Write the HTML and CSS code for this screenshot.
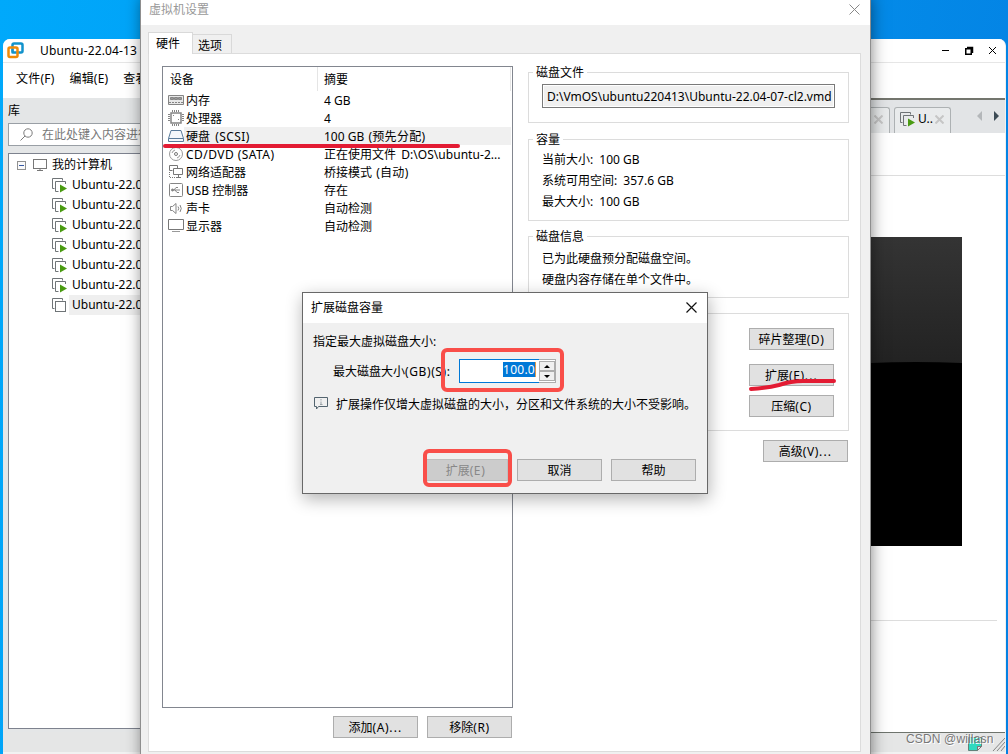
FILE: index.html
```html
<!DOCTYPE html>
<html lang="zh-CN">
<head>
<meta charset="utf-8">
<title>虚拟机设置</title>
<link rel="stylesheet" href="styles.css">
</head>
<body>
<svg class="defs" width="0" height="0">
  <symbol id="vm" viewBox="0 0 16 16"><path d="M3.500 11.500h-2v-10h10v2" fill="none" stroke="#6f7477"/><rect x="4.500" y="4.500" width="10" height="10" fill="#fff" stroke="#6f7477"/></symbol>
  <symbol id="vm-on" viewBox="0 0 16 16"><path d="M3.500 11.500h-2v-10h10v2M14.500 7v-2.500h-10v10h3" fill="none" stroke="#6f7477"/><path d="M9 7.500l7 4-7 4z" fill="#4a9b12"/></symbol>
</svg>
<div class="desktop">
  <section class="main-window">
    <header class="main-title">
      <svg class="logo" width="17" height="17" viewBox="0 0 17 17"><rect x="5.500" y="1.500" width="10" height="9" rx="1.500" fill="none" stroke="#1192cb" stroke-width="2.500"/><rect x="1.500" y="5.500" width="9" height="9.500" rx="1.500" fill="none" stroke="#f08a08" stroke-width="2.500"/><path d="M5.500 7v4.500" stroke="#1192cb" stroke-width="2"/></svg>
      <span class="main-name">Ubuntu-22.04-13</span>
      <svg class="win-buttons" width="56" height="12" viewBox="0 0 56 12"><path d="M1 5.500h7" stroke="#000"/><path d="M24.750 3.750h5.500v5.500h-5.500zM26 2.500h5.500v5.500" fill="none" stroke="#000" stroke-width="1.500"/><path d="M48 2l7 7M55 2l-7 7" stroke="#000"/></svg>
    </header>
    <nav class="menu"><span>文件(F)</span><span>编辑(E)</span><span>查看(V)</span></nav>
    <div class="workspace">
      <aside class="library">
        <div class="library-title">库</div>
        <div class="search"><svg width="13" height="13" viewBox="0 0 13 13" fill="none" stroke="#7b7b7b"><circle cx="8" cy="5" r="4.200"/><path d="M5 8l-4.500 4.500"/></svg><span>在此处键入内容进行搜索</span></div>
        <div class="tree">
          <div class="node root"><svg width="9" height="9" viewBox="0 0 9 9"><rect x=".5" y=".5" width="8" height="8" fill="#fafafa" stroke="#919191"/><path d="M2 4.500h5" stroke="#3558a4"/></svg><svg class="pc" width="14" height="12" viewBox="0 0 14 12" fill="none" stroke="#777"><rect x=".5" y=".5" width="13" height="9"/><path d="M4 11.500h6M7 9.500v2"/></svg><span>我的计算机</span></div>
          <div class="node"><svg class="vm"><use href="#vm-on"/></svg><span>Ubuntu-22.04-07</span></div>
          <div class="node"><svg class="vm"><use href="#vm-on"/></svg><span>Ubuntu-22.04-08</span></div>
          <div class="node"><svg class="vm"><use href="#vm-on"/></svg><span>Ubuntu-22.04-09</span></div>
          <div class="node"><svg class="vm"><use href="#vm-on"/></svg><span>Ubuntu-22.04-10</span></div>
          <div class="node"><svg class="vm"><use href="#vm-on"/></svg><span>Ubuntu-22.04-11</span></div>
          <div class="node"><svg class="vm"><use href="#vm-on"/></svg><span>Ubuntu-22.04-12</span></div>
          <div class="node"><svg class="vm"><use href="#vm"/></svg><span class="current">Ubuntu-22.04-13</span></div>
        </div>
      </aside>
      <div class="content">
        <div class="tabs">
          <div class="vtab"><svg width="9" height="9" viewBox="0 0 9 9"><path d="M.5.5l8 8M8.500.5l-8 8" stroke="#c6c6c6" stroke-width="2"/></svg></div>
          <div class="vtab open"><svg class="vm"><use href="#vm-on"/></svg><span>U..</span><svg width="9" height="9" viewBox="0 0 9 9"><path d="M.5.5l8 8M8.500.5l-8 8" stroke="#c6c6c6" stroke-width="2"/></svg></div>
          <svg class="arrows" width="22" height="10" viewBox="0 0 22 10"><path d="M5 0v10L0 5z" fill="#b4b7ba"/><path d="M17 0v10l5-5z" fill="#3c4b55"/></svg>
        </div>
        <div class="heading"></div>
        <div class="summary"><svg class="preview" width="462" height="309" viewBox="0 0 462 309"><defs><linearGradient id="sheen" x1="0" y1="0" x2="0" y2="1"><stop offset="0" stop-color="#343434"/><stop offset="1" stop-color="#1f1f1f"/></linearGradient></defs><path d="M0 0h462v309H0z"/><path d="M0 0h462v126q-46-2-92 0L0 150z" fill="url(#sheen)"/></svg></div>
        <div class="details"></div>
      </div>
    </div>
    <footer class="status"><div class="status-items"><svg width="41" height="18" viewBox="0 0 41 18"><path d="M4.500 4.500h13v9h-4v4h-9z" fill="#2fd9bf" stroke="#61837b"/><path d="M13.500 17.500v-4h4z" fill="#e5e5e5" stroke="#777"/><path d="M29 18l12-13M33 18l8-9M37 18l4-5" stroke="#858585"/></svg></div></footer>
  </section>
  <div class="watermark">CSDN @willasn</div>

  <section class="settings">
    <header class="settings-title"><span>虚拟机设置</span><svg width="11" height="11" viewBox="0 0 11 11"><path d="M.5.5l10 10M10.500.5l-10 10" stroke="#888"/></svg></header>
    <div class="page-tabs"><span class="page-tab active">硬件</span><span class="page-tab">选项</span></div>
    <div class="page">
      <div class="left">
        <div class="devices">
          <div class="dev-head"><span>设备</span><span>摘要</span></div>
          <div class="dev"><svg viewBox="0 0 16 16" fill="none" stroke="#858585"><path d="M.5 3.500h15v9H.5z" fill="#e8e8e8"/><path d="M2.500 5.500h3v2h-3zM6.500 5.500h3v2h-3zM10.500 5.500h3v2h-3z" fill="#999"/><path d="M1 10.500h14" stroke-dasharray="2 1"/></svg><span>内存</span><span>4 GB</span></div>
          <div class="dev"><svg viewBox="0 0 16 16" fill="none" stroke="#858585"><rect x="3" y="3" width="10" height="10" stroke-width="1.500"/><path d="M4.500 0v2M6.500 0v2M8.500 0v2M10.500 0v2M4.500 14v2M6.500 14v2M8.500 14v2M10.500 14v2M0 4.500h2M0 6.500h2M0 8.500h2M0 10.500h2M14 4.500h2M14 6.500h2M14 8.500h2M14 10.500h2M5 5.500h1M10 9.500h1"/></svg><span>处理器</span><span>4</span></div>
          <div class="dev selected"><svg viewBox="0 0 16 16" fill="#f3f7fb" stroke="#587a9a"><path d="M.5 10.500l2.500-8h10l2.500 8v3H.5zM.5 10.500h15"/></svg><span>硬盘 <b class="wide scsi">(SCSI)</b></span><span>100 GB <b class="paren">(预先分配)</b></span></div>
          <div class="dev"><svg viewBox="0 0 16 16" fill="none" stroke="#9a9a9a"><circle cx="8" cy="8" r="6.500"/><circle cx="8" cy="8" r="1.500" stroke="#777"/><path d="M4 7a4.500 4.500 0 0 1 3-3M12 9a4.500 4.500 0 0 1-3 3"/></svg><span><b class="wide">CD/DVD (SATA)</b></span><span>正在使用文件 <b class="disc">D:\OS\ubuntu-2...</b></span></div>
          <div class="dev"><svg viewBox="0 0 16 16" fill="none" stroke="#777"><path d="M1.500 6.500v-5h8v3M1.500 6.500h3"/><path d="M5.500 4.500h9v6h-9z" fill="#fff"/><path d="M8 13.500h5M10.500 10.500v3"/><path d="M1.500 8v5.500h6" stroke-dasharray="1 1"/></svg><span>网络适配器</span><span>桥接模式 <b class="paren">(自动)</b></span></div>
          <div class="dev"><svg viewBox="0 0 16 16" fill="none" stroke="#858585"><rect x="1.500" y="1.500" width="13" height="13" rx="1"/><path d="M4 8h8M6 8l2-2.500h2M7 8l2 2.500h2"/><circle cx="4.500" cy="8" r="1" fill="#858585"/></svg><span>USB 控制器</span><span>存在</span></div>
          <div class="dev"><svg viewBox="0 0 16 16" fill="none" stroke="#858585"><path d="M2.500 6.500h2l3.500-3v10l-3.500-3h-2zM10 6.500q1.500 2 0 4M12 5q2.500 3.500 0 7"/></svg><span>声卡</span><span>自动检测</span></div>
          <div class="dev"><svg viewBox="0 0 16 16" fill="#fff" stroke="#777"><path d="M.5 1.500h15v10H.5z"/><path d="M4 13.500h8" stroke="#999"/></svg><span>显示器</span><span>自动检测</span></div>
        </div>
        <div class="left-buttons"><button class="btn">添加<b class="key">(A)<i class="dots">...</i></b></button><button class="btn">移除<b class="key">(R)</b></button></div>
      </div>
      <div class="right">
        <fieldset class="group file"><legend>磁盘文件</legend><div class="path">D:\VmOS\ubuntu220413\Ubuntu-22.04-07-cl2.vmd</div></fieldset>
        <fieldset class="group capacity"><legend>容量</legend><p>当前大小<b class="colon">:</b> 100 GB</p><p>系统可用空间<b class="colon">:</b> 357.6 GB</p><p>最大大小<b class="colon">:</b> 100 GB</p></fieldset>
        <fieldset class="group info"><legend>磁盘信息</legend><p>已为此硬盘预分配磁盘空间。</p><p>硬盘内容存储在单个文件中。</p></fieldset>
        <div class="group tools"><button class="btn">碎片整理<b class="key">(D)</b></button><button class="btn expand">扩展<b class="key">(E)<i class="dots">...</i></b></button><button class="btn">压缩<b class="key">(C)</b></button></div>
        <button class="btn advanced">高级<b class="key">(V)<i class="dots">...</i></b></button>
      </div>
    </div>
  </section>

  <section class="dialog">
    <header class="dialog-title"><span>扩展磁盘容量</span><svg width="11" height="11" viewBox="0 0 11 11"><path d="M.5.5l10 10M10.500.5l-10 10" stroke="#111" stroke-width="1.200"/></svg></header>
    <div class="prompt">指定最大虚拟磁盘大小:</div>
    <div class="size-row"><span class="size-label">最大磁盘大小<b class="key">(GB)(S):</b></span>
      <div class="spin"><div class="value"><span>100.0</span></div><div class="steps"><i><svg width="6" height="3" viewBox="0 0 6 3"><path d="M0 3l3-3 3 3z"/></svg></i><i><svg width="6" height="3" viewBox="0 0 6 3"><path d="M0 0l3 3 3-3z"/></svg></i></div></div>
    </div>
    <div class="note"><svg width="15" height="13" viewBox="0 0 15 13" fill="none" stroke="#53646f"><path d="M.5.5h13v9h-9l-2 2.500v-2.500h-2z"/><path d="M7 2v1.500M7 4.500v3M6 7.500h2.500" stroke="#9aa3a8"/></svg><span>扩展操作仅增大虚拟磁盘的大小，分区和文件系统的大小不受影响。</span></div>
    <div class="actions"><button class="btn disabled" disabled>扩展<b class="key">(E)</b></button><button class="btn">取消</button><button class="btn">帮助</button></div>
  </section>

  <svg class="marks" width="1008" height="754" viewBox="0 0 1008 754" fill="none">
    <path d="M165 146h293" stroke="#e31b33" stroke-width="4" stroke-linecap="round"/>
    <path d="M751 389q17-1 28-4 12-4 24-4h31" stroke="#e31b33" stroke-width="4" stroke-linecap="round"/>
    <rect x="443" y="350" width="119" height="40" rx="4" stroke="#f94e49" stroke-width="4"/>
    <rect x="425" y="451" width="85" height="34" rx="4" stroke="#f94e49" stroke-width="4"/>
  </svg>
</div>
</body>
</html>
```
FILE: styles.css
```css
* { box-sizing: border-box; }
body { margin: 0; font: 12px/18px "Noto Sans", "Noto Sans CJK SC", sans-serif; color: #000; }
svg { display: block; flex: none; }
p { margin: 0; }
b { font-weight: normal; }
.defs { position: absolute; }
.desktop { position: relative; width: 1008px; height: 754px; overflow: hidden; white-space: nowrap; background: linear-gradient(100deg, #00a9fb 0%, #0298f1 45%, #0480e2 100%); }
.wide { letter-spacing: .45px; }
.scsi { margin-left: 2px; }
.paren { margin-left: 1px; letter-spacing: .3px; }
.disc { margin-left: 2px; letter-spacing: .05px; }
.key { letter-spacing: .6px; }
.dots { font-style: normal; letter-spacing: 1.2px; }
.colon { margin-right: 3px; }

.main-window { position: absolute; left: 3px; top: 39px; width: 1003px; height: 715px; display: flex; flex-direction: column; background: #f3f3f3; border-right: 1px solid #f0f0f0; border-radius: 7px 7px 0 0; overflow: hidden; }
.main-title { height: 24px; display: flex; align-items: center; padding-left: 4px; background: #fff; border-bottom: 1px solid #e6e6e6; }
.main-name { margin-left: 16px; width: 901px; letter-spacing: .15px; }
.menu { height: 35px; display: flex; gap: 15px; padding: 7px 0 0 13px; background: #fff; letter-spacing: .2px; }
.workspace { height: 634px; display: flex; }
.library { width: 597px; padding: 0 4px 0 5px; background: #e4e6e7; }
.library-title { height: 25px; padding-top: 4px; }
.search { height: 23px; display: flex; align-items: center; gap: 9px; padding-left: 11px; background: #fff; border: 1px solid #999fa5; color: #777; }
.tree { height: 576px; margin-top: 7px; padding-top: 1px; background: #fff; border: 1px solid #7d828e; }
.node { height: 20px; display: flex; align-items: center; padding-left: 42px; gap: 5px; }
.node span { line-height: 20px; }
.node.root { padding-left: 8px; gap: 6px; }
.node.root span { margin-left: -1px; }
.root .pc { margin-left: 1px; }
.vm { width: 16px; height: 16px; }
.node .current { background: #efefef; margin-left: -3px; padding-left: 3px; }
.content { flex: 1; background: #fff; }
.tabs { height: 35px; display: flex; padding: 7px 6px 0 0; background: #e2e4e6; border-top: 2px solid #73756d; }
.vtab { width: 290px; display: flex; align-items: center; justify-content: flex-end; padding: 0 6px 3px 0; border: 1px solid #adb1b3; border-bottom: 0; border-radius: 3px 3px 0 0; background: #e9ebec; }
.vtab.open { width: 57px; margin-left: 4px; padding-left: 4px; justify-content: flex-start; gap: 2px; }
.open span { width: 16px; padding-left: 1px; }
.arrows { margin: 4px 0 0 auto; }
.heading { height: 43px; border-bottom: 1px solid #ddd; }
.summary { height: 445px; margin-right: 8px; padding: 61px 0 0 0; border-bottom: 1px solid #ddd; }
.preview { margin-left: -100px; }
.status { height: 22px; display: flex; justify-content: flex-end; background: #e5e6e6; border-bottom: 2px solid #f2f2f2; }
.status-items { width: 405px; display: flex; justify-content: flex-end; border-top: 1px solid #6e746d; }
.watermark { position: absolute; left: 906px; top: 731px; font: 12px/17px "Liberation Sans", sans-serif; color: #777; letter-spacing: .15px; text-shadow: 1px 1px #fff; }

.settings { position: absolute; left: 141px; top: -6px; width: 729px; height: 780px; background: #f0f0f0; box-shadow: 0 0 0 1px #8e8e8e, 1px 3px 15px rgba(0,0,0,.5); }
.settings-title { height: 31px; display: flex; justify-content: space-between; align-items: center; padding: 0 10px 0 8px; background: #fff; color: #999; }
.page-tabs { height: 28px; display: flex; padding: 7px 0 0 7px; align-items: flex-end; }
.page-tab { width: 39px; height: 19px; padding-left: 5px; background: #f0f0f0; border: 1px solid #d9d9d9; border-left: 0; border-bottom: 0; line-height: 21px; }
.page-tab.active { z-index: 1; width: 45px; height: 22px; padding-left: 7px; margin-bottom: -1px; background: #fff; border-left: 1px solid #d9d9d9; line-height: 21px; }
.page { width: 713px; height: 699px; margin-left: 7px; display: flex; padding: 12px 11px 0 13px; background: #fff; border: 1px solid #dcdcdc; }
.left { width: 351px; }
.devices { height: 642px; border: 1px solid #82868f; padding: 0 1px; }
.dev-head { height: 24px; display: flex; line-height: 26px; }
.dev-head span:first-child { width: 154px; padding-left: 6px; border-right: 1px solid #e5e5e5; }
.dev-head span:last-child { width: 193px; padding-left: 6px; border-right: 1px solid #e5e5e5; }
.dev { height: 18px; display: flex; align-items: center; padding-left: 4px; }
.dev svg { width: 16px; height: 16px; margin-right: 2px; }
.dev span { line-height: 18px; padding-top: 1px; }
.dev span:nth-of-type(1) { width: 138px; }
.selected { background: linear-gradient(90deg, #fff 20px, #f0f0f0 20px); }
.left-buttons { display: flex; justify-content: flex-end; gap: 9px; padding: 8px 1px 0 0; }
.btn { display: block; width: 85px; height: 22px; padding: 1px 0 0; border: 1px solid #adadad; border-radius: 0; background: #e1e1e1; font: inherit; line-height: 18px; text-align: center; color: #000; }
.right { width: 321px; margin-left: 15px; }
.group { position: relative; display: block; min-width: 0; margin: 0; padding: 0 13px; border: 1px solid #dcdcdc; }
.group legend { height: 18px; padding: 1px 3px 0; margin-left: -9px; line-height: 18px; }
.file { height: 60px; margin-top: -3px; }
.path { width: 293px; height: 24px; margin-top: 3px; padding: 1px 0 0 4px; border: 1px solid #7a7a7a; box-shadow: inset 0 0 0 1px #fff; background: #f0f0f0; line-height: 21px; overflow: hidden; }
.capacity { height: 91px; margin-top: 7px; }
.capacity p, .info p { line-height: 21px; }
.capacity legend + p { margin-top: 1px; }
.info { height: 71px; margin-top: 6px; }
.info legend + p { margin-top: 3px; }
.tools { height: 118px; margin-top: 15px; padding: 14px 14px 0 0; display: flex; flex-direction: column; align-items: flex-end; }
.expand { margin: 14px 0 9px; }
.advanced { margin: 9px 0 0 235px; }

.dialog { position: absolute; left: 302px; top: 292px; width: 406px; height: 202px; background: #f0f0f0; border: 1px solid #686868; box-shadow: 1px 5px 16px rgba(0,0,0,.3); }
.dialog-title { height: 30px; display: flex; justify-content: space-between; align-items: center; padding: 0 10px 1px 8px; background: #fff; }
.prompt { padding: 10px 0 0 10px; height: 27px; }
.size-row { display: flex; align-items: center; padding: 9px 0 0 30px; height: 33px; }
.size-label { width: 126px; padding-top: 2px; }
.spin { width: 97px; height: 24px; display: flex; border: 1px solid #adadad; background: #fff; }
.value { width: 80px; margin: -1px 0 -1px -1px; padding: 2px 3px 0 0; border: 1px solid #0078d7; border-right: 0; text-align: right; line-height: 15px; }
.value span { display: inline-block; height: 15px; background: #0078d7; color: #fff; letter-spacing: .25px; border-right: 1px solid #e19a4c; }
.steps { display: flex; flex-direction: column; width: 16px; padding: 1px 0 1px; }
.steps i { flex: 1; display: grid; place-items: center; background: #f0f0f0; border: 1px solid #adadad; }
.note { display: flex; gap: 7px; padding: 12px 0 0 11px; line-height: 20px; }
.note svg { margin-top: 2px; }
.actions { display: flex; gap: 9px; padding: 44px 0 0 120px; }
.btn.disabled { background: #ccc; border-color: #bfbfbf; color: #888; }
.marks { position: absolute; left: 0; top: 0; pointer-events: none; }
```
